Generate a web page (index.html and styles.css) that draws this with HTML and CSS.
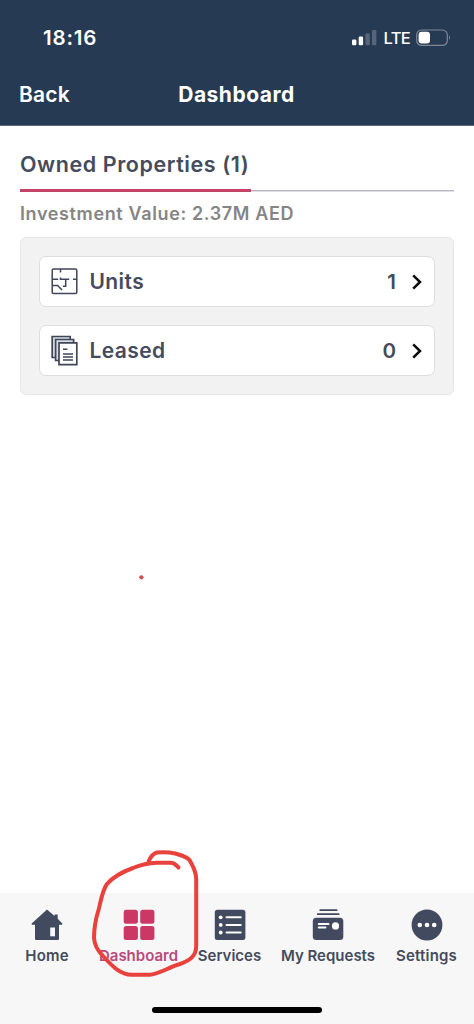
FILE: index.html
```html
<!DOCTYPE html>
<html lang="en">
<head>
<meta charset="utf-8">
<meta name="viewport" content="width=device-width">
<title>Dashboard</title>
<link rel="stylesheet" href="styles.css">
</head>
<body>
<div class="screen">
  <header class="header">
    <div class="status">
      <span class="time">18:16</span>
      <div class="indicators">
        <svg class="signal" width="26" height="16" viewBox="0 0 26 16"><g fill="#fff"><rect x="1" y="9.5" width="4.4" height="5.8" rx="1.2"/><rect x="7.7" y="6.6" width="4.4" height="8.7" rx="1.2"/></g><g fill="#566579"><rect x="14.4" y="3.4" width="4.4" height="11.9" rx="1.2"/><rect x="21" y="0" width="4.4" height="15.3" rx="1.2"/></g></svg>
        <span class="lte">LTE</span>
        <svg class="battery" width="36" height="18" viewBox="0 0 36 18"><rect x=".7" y="1" width="30.6" height="15.4" rx="4.8" fill="none" stroke="#7d8795" stroke-width="1.2"/><rect x="2.6" y="2.8" width="11.4" height="11.8" rx="3" fill="#fff"/><path d="M33 6.3q2 2.4 0 4.8z" fill="#7d8795"/></svg>
      </div>
    </div>
    <div class="titlebar">
      <span class="back">Back</span>
      <h1 class="title">Dashboard</h1>
    </div>
  </header>

  <main class="content">
    <div class="tabs"><h2 class="tab">Owned Properties (1)</h2></div>
    <p class="value">Investment Value: 2.37M AED</p>
    <section class="panel">
      <div class="row">
        <svg class="row-icon" width="28" height="32" viewBox="0 0 28 32" fill="none" stroke="#3f4658" stroke-width="1.5"><rect x="1.2" y="3" width="24.6" height="24.6" rx="1.4"/><path d="M9.500 3v3.600M1.200 13.300h6M9.500 11.600v1.700h8.700M14.700 13.300v7h-2.800M22 13.300h3.800M1.200 19.500h5.400l4.400 4.600"/></svg>
        <span class="name">Units</span>
        <span class="count">1</span>
        <svg class="chevron" width="12" height="18" viewBox="0 0 12 18"><path d="M2.2 2.4 9 9l-6.8 6.6" fill="none" stroke="#0b0b0f" stroke-width="2.5"/></svg>
      </div>
      <div class="row">
        <svg class="row-icon" width="28" height="32" viewBox="0 0 28 32" stroke="#3f4658" stroke-width="1.7" fill="#d9dce3"><path d="M1.2 1.500h18v21h-18z"/><path d="M4.600 4.500h18v21h-18z"/><path d="M8 7.800h17.800v21.800h-17.800z" fill="#fff"/><path d="M12 14.200h4.500M12 19h10M12 22h10M12 25h10" fill="none" stroke-width="1.400"/></svg>
        <span class="name">Leased</span>
        <span class="count">0</span>
        <svg class="chevron" width="12" height="18" viewBox="0 0 12 18"><path d="M2.2 2.400 9 9l-6.800 6.600" fill="none" stroke="#0b0b0f" stroke-width="2.500"/></svg>
      </div>
    </section>
  </main>

  <nav class="nav">
    <a class="item home">
      <svg width="32" height="32" viewBox="0 0 32 32"><path fill="#414a5e" d="M16 .5 23.500 7V5.500h3.200v4.300L31.300 14.500v1.200H28V30q0 1-1 1H5q-1 0-1-1V15.700H.7V14.500z"/><path fill="#f7f7f8" d="M19.200 18.500h4.800v8.800h-4.800z"/></svg>
      <span>Home</span>
    </a>
    <a class="item dashboard">
      <svg width="32" height="32" viewBox="0 0 32 32" fill="#cb3866"><rect x=".7" y=".7" width="14.200" height="14" rx="2.500"/><rect x="17.200" y=".7" width="14.200" height="14" rx="2.500"/><rect x=".7" y="17" width="14.200" height="14" rx="2.500"/><rect x="17.200" y="17" width="14.200" height="14" rx="2.500"/></svg>
      <span>Dashboard</span>
    </a>
    <a class="item services">
      <svg width="32" height="32" viewBox="0 0 32 32"><rect x=".8" y=".7" width="30.600" height="30.400" rx="2.500" fill="#414a5e"/><g fill="#fff"><circle cx="6.700" cy="8.300" r="1.900"/><circle cx="6.700" cy="15.900" r="1.900"/><circle cx="6.700" cy="23.500" r="1.900"/></g><path d="M12.500 8.300h14.200M12.500 15.900h14.200M12.500 23.500h14.200" stroke="#fff" stroke-width="2" stroke-linecap="round"/></svg>
      <span>Services</span>
    </a>
    <a class="item requests">
      <svg width="32" height="32" viewBox="0 0 32 32"><path d="M8.200 1.200h16.500M5.700 5.200h21" stroke="#414a5e" stroke-width="1.700" stroke-linecap="round"/><rect x=".8" y="8.700" width="30.500" height="22.300" rx="3.500" fill="#414a5e"/><path d="M6.700 15h9.800M6.700 18.500h6.800" stroke="#fff" stroke-width="1.800" stroke-linecap="round"/><circle cx="23.500" cy="16.900" r="3.600" fill="#fff"/></svg>
      <span>My Requests</span>
    </a>
    <a class="item settings">
      <svg width="32" height="32" viewBox="0 0 32 32"><circle cx="16" cy="16" r="15.400" fill="#414a5e"/><g fill="#fff"><circle cx="8.800" cy="16" r="2.300"/><circle cx="16" cy="16" r="2.300"/><circle cx="23.200" cy="16" r="2.300"/></g></svg>
      <span>Settings</span>
    </a>
    <div class="home-indicator"></div>
  </nav>

  <svg class="annotation" width="474" height="1024" viewBox="0 0 474 1024" fill="none" stroke="#e9413b" stroke-width="4" stroke-linecap="round" stroke-linejoin="round"><path d="M178.500 867.500C175.500 864.500 174.500 862.700 171 862.700H157C148 863 140 865 133 868C122 872 113 877 107 884C102 891 101 901 98.500 910C96 918 94 927 94 938C94.500 946 98 951 103 956C112 966 120 974.500 132 974.700H150C161 973.500 169 967 180 964C190 960.500 196.200 956 196.200 946V879C196 870 192 865 189.500 860C186 856 180 855 175 853.500C169 852 163 852 157 852.500C152.500 853.500 150.500 857 148.500 861.500"/><circle cx="141.400" cy="577.300" r="2.100" fill="#dc4a48" stroke="none"/></svg>
</div>
</body>
</html>
```
FILE: styles.css
```css
* { box-sizing: border-box; }
body { margin: 0; background: #fff; font-family: Inter, "Liberation Sans", sans-serif; font-weight: 600; color: #444b5c; }
.screen { position: relative; width: 474px; height: 1024px; display: flex; flex-direction: column; overflow: hidden; }
.header { height: 126px; background: #273a53; border-bottom: 1px solid #5c6a7e; color: #fff; }
.status { height: 75px; display: flex; justify-content: space-between; align-items: center; padding: 0 22px 0 43px; }
.time { font-size: 20.5px; letter-spacing: .8px; }
.indicators { display: flex; align-items: center; }
.signal { margin-right: 7px; }
.lte { font-size: 16.5px; font-weight: 500; letter-spacing: -.7px; margin-right: 6px; }
.titlebar { height: 39px; display: grid; grid-template-columns: 1fr auto 1fr; align-items: center; padding: 0 20px 0 19px; }
.back { font-size: 21px; letter-spacing: .2px; }
.title { margin: 0; font-size: 21px; font-weight: 700; letter-spacing: .5px; }
.content { flex: 1; padding: 20px 20px 0; }
.tabs { height: 46px; display: flex; background: linear-gradient(#b9b9c5, #b9b9c5) 0 43.5px / 100% 1.5px no-repeat; }
.tab { width: 231px; margin: 0; border-bottom: 3px solid #c64368; font-size: 21.5px; font-weight: 600; letter-spacing: .57px; line-height: 37px; white-space: nowrap; }
.value { height: 45px; margin: 0; font-size: 18px; letter-spacing: .63px; line-height: 43px; color: #858585; }
.panel { height: 158px; display: flex; flex-direction: column; gap: 18px; padding: 18px 18px; background: #f2f2f2; border: 1px solid #e7e7e8; border-radius: 6px; }
.row { height: 51px; display: flex; align-items: center; padding: 0 11px 0 10.5px; background: #fff; border: 1px solid #dedede; border-radius: 7px; }
.name { margin-left: 11px; font-size: 21px; letter-spacing: .4px; flex: 1; }
.count { font-size: 20.5px; margin-right: 15px; }
.nav { height: 131px; display: flex; flex-wrap: wrap; align-content: flex-start; justify-content: flex-start; padding-top: 16px; background: #f7f7f8; }
.item { display: flex; flex-direction: column; align-items: center; height: 98px; font-size: 15px; white-space: nowrap; }
.item span { line-height: 20px; margin-top: 5px; }
.home { width: 94px; letter-spacing: .2px; }
.dashboard { width: 89px; color: #b9497c; }
.services { width: 93px; }
.requests { width: 104px; }
.settings { width: 93px; letter-spacing: .2px; }
.home-indicator { width: 170px; height: 6px; margin-left: 152px; background: #000; border-radius: 3px; }
.annotation { position: absolute; left: 0; top: 0; pointer-events: none; }
```
